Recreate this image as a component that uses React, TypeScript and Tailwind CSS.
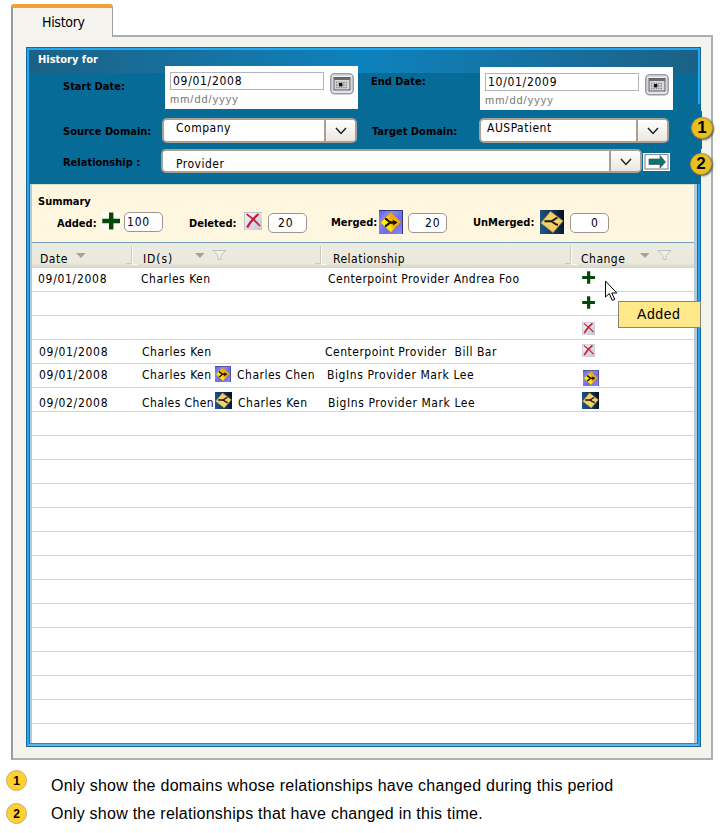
import React from "react";
import { clsx } from "clsx";
import { twMerge } from "tailwind-merge";

const TAHOMA = "font-['DejaVu_Sans_Condensed','DejaVu_Sans',sans-serif] [font-stretch:condensed]";

function Label({ children, className }: { children: React.ReactNode; className?: string }) {
  return <span className={clsx("shrink-0 whitespace-pre text-[11px] leading-[16px] font-bold", className || "text-black")}>{children}</span>;
}

function Txt({ children, className }: { children?: React.ReactNode; className?: string }) {
  return <span className={twMerge("shrink-0 whitespace-pre text-[12px] leading-[16px] tracking-[0.5px] text-black", className)}>{children}</span>;
}

function CalendarIcon() {
  return (
    <svg width="24" height="22" viewBox="0 0 24 22" className="block shrink-0">
      <rect x="0.8" y="0.8" width="22.4" height="20" rx="4" fill="#f1f1f6" stroke="#9a9aa6" strokeWidth="1.6" />
      <rect x="2.5" y="2.5" width="19" height="16.5" rx="3" fill="#f4f4f8" stroke="#d5d5de" />
      <rect x="4" y="4.500" width="16" height="12.500" fill="#d9d9d9" stroke="#555" />
      <rect x="4" y="4.500" width="16" height="2.500" fill="#6b6b6b" />
      <path d="M6 9.5h12M6 12h12M6 14.5h12" stroke="#888" strokeWidth="1.4" strokeDasharray="1.4 1" />
      <rect x="9" y="10" width="3.4" height="3.4" fill="#111" />
    </svg>
  );
}

function PlusIcon({ size }: { size: number }) {
  return (
    <svg width={size} height={size} viewBox="0 0 18 18" className="block shrink-0 bg-white/60">
      <path d="M7 0.5h4.4v6.3H18v4.4h-6.6v6.3H7v-6.3H0.3V6.8H7z" fill="#034a08" />
    </svg>
  );
}

function DeleteIcon({ size }: { size: number }) {
  return (
    <svg width={size} height={size} viewBox="0 0 18 18" className="block shrink-0">
      <defs>
        <linearGradient id="delbg" x1="0" y1="0" x2="1" y2="1">
          <stop offset="0" stopColor="#f7f7fb" />
          <stop offset="1" stopColor="#c4c4d2" />
        </linearGradient>
      </defs>
      <rect width="18" height="18" fill="url(#delbg)" />
      <path d="M0 0.5h18M0.5 0v18" stroke="#b9b9c4" strokeWidth="0.8" />
      <path d="M2.500 2c5 3.500 9 7 13.500 12" fill="none" stroke="#d0203a" strokeWidth="1.700" />
      <path d="M14.500 2C10 6 6 10 3.200 15.500" fill="none" stroke="#c81834" strokeWidth="2.200" />
    </svg>
  );
}

function MergeIcon({ size }: { size: number }) {
  return (
    <svg width={size} height={size} viewBox="0 0 24 24" className="block shrink-0">
      <defs>
        <linearGradient id="mergebg" x1="0" y1="0" x2="1" y2="1">
          <stop offset="0" stopColor="#5a5ae0" />
          <stop offset="0.3" stopColor="#8a8afa" />
          <stop offset="0.6" stopColor="#6a6af0" />
          <stop offset="1" stopColor="#8a8af8" />
        </linearGradient>
        <linearGradient id="mergesign" x1="0" y1="0.7" x2="1" y2="0.3">
          <stop offset="0.35" stopColor="#fff000" />
          <stop offset="0.6" stopColor="#f0a818" />
        </linearGradient>
      </defs>
      <rect width="24" height="24" fill="url(#mergebg)" />
      <path d="M0 0.5h23.500V24" fill="none" stroke="#35357a" />
      <path d="M12 2l10 10-10 10.500L1.500 12.500z" fill="url(#mergesign)" stroke="#b8860b" strokeWidth="0.7" />
      <path d="M6 8.800c3 0 3 3.700 6 3.700h5M6 16c3 0 3-3.500 6-3.500" fill="none" stroke="#1a1400" strokeWidth="2.300" />
      <path d="M13.500 9.500l5 3-5 3.300 1-3.300z" fill="#1a1400" />
    </svg>
  );
}

function UnmergeIcon({ size }: { size: number }) {
  return (
    <svg width={size} height={size} viewBox="0 0 24 24" className="block shrink-0">
      <defs>
        <linearGradient id="unmergebg" x1="0" y1="0.5" x2="1" y2="0.3">
          <stop offset="0" stopColor="#1c5585" />
          <stop offset="0.6" stopColor="#0e3158" />
          <stop offset="1" stopColor="#051026" />
        </linearGradient>
      </defs>
      <rect width="24" height="24" fill="url(#unmergebg)" />
      <path d="M10.500 1.500L23 11 13 22.500 1 13z" fill="#f1cf6c" stroke="#c79a35" strokeWidth="0.8" />
      <path d="M4.500 11.300h7M17.500 8c-3 0-4 3.300-7 3.300 3 0 4 3.500 7.500 3.500" fill="none" stroke="#1a1608" strokeWidth="1.900" />
    </svg>
  );
}

function SortArrow({ className }: { className?: string }) {
  return (
    <svg width="10" height="5" viewBox="0 0 10 5" className={clsx("block shrink-0", className)}>
      <path d="M0 0h9.500L5 5z" fill="#a5a397" />
    </svg>
  );
}

function Funnel({ className }: { className?: string }) {
  return (
    <svg width="15" height="11" viewBox="0 0 15 11" className={clsx("block shrink-0", className)}>
      <path d="M0.800 0.500h13L9 5.500V9.500H6V5.500z" fill="#f1f0ea" stroke="#bfbfc2" />
    </svg>
  );
}

function Divider({ className }: { className?: string }) {
  return (
    <svg width="12" height="19" viewBox="0 0 12 19" className={clsx("block shrink-0", className)}>
      <path d="M5.500 0v17.500H0" fill="none" stroke="#cbc9bb" />
      <path d="M6.500 0v18.500H12" fill="none" stroke="#fbfbf7" />
    </svg>
  );
}

function Select({ value, className, textClass }: { value: string; className: string; textClass: string }) {
  return (
    <div className={clsx("flex shrink-0 overflow-hidden rounded-[5px] border-2 border-[#ab9f92] bg-white", className)}>
      <div className="flex-1 overflow-hidden">
        <Txt className={clsx("block", textClass)}>{value}</Txt>
      </div>
      <div className="flex h-full w-[31px] items-center justify-center border-l-2 border-[#ab9f92] bg-linear-to-b from-white to-[#ebe7e0]">
        <svg width="12" height="8" viewBox="0 0 12 8" className="mt-px block">
          <path d="M1 1l5 5.500L11 1" fill="none" stroke="#222" strokeWidth="1.500" />
        </svg>
      </div>
    </div>
  );
}

function DateField({ value, className }: { value: string; className?: string }) {
  return (
    <div className={clsx("flex h-[43px] shrink-0 bg-white", className)}>
      <div className="mt-[6px] ml-[5px] w-[154px]">
        <div className="h-[18px] border border-[#b4b4ba] pl-[2px]">
          <Txt className="block tracking-[0.7px]">{value}</Txt>
        </div>
        <div className="mt-[2px] h-[15px] font-['Liberation_Sans',Arial,sans-serif] text-[11px] leading-[15px] tracking-[1px] text-[#777]">mm/dd/yyyy</div>
      </div>
      <div className="mt-[7px] ml-[6px]">
        <CalendarIcon />
      </div>
    </div>
  );
}

function CountBox({ value, className }: { value: string; className?: string }) {
  return (
    <div className={clsx("flex h-[20px] w-[39px] shrink-0 items-center rounded-[5px] border border-[#9d9590] bg-white", className)}>
      <Txt className="tracking-[0.8px]">{value}</Txt>
    </div>
  );
}

function Badge({ n, className }: { n: string; className: string }) {
  return (
    <div className={clsx("flex shrink-0 items-center justify-center rounded-full border font-['Liberation_Sans',Arial,sans-serif] font-bold text-black", className)}>
      {n}
    </div>
  );
}

type Row = {
  date?: string;
  ids?: React.ReactNode;
  rel?: string;
  padX?: string;
  padY?: string;
  relClass?: string;
  change?: React.ReactNode;
};

const rows: Row[] = [
  { date: "09/01/2008", ids: <Txt>Charles Ken</Txt>, rel: "Centerpoint Provider Andrea Foo", padX: "pl-[6px]", padY: "pt-[3px]", relClass: "pl-[3px]", change: <div className="mt-[3px] ml-[1px]"><PlusIcon size={13} /></div> },
  { change: <div className="mt-[4px] ml-[1px]"><PlusIcon size={13} /></div> },
  { change: <div className="mt-[6px] ml-[1px]"><DeleteIcon size={13} /></div> },
  { date: "09/01/2008", ids: <Txt>Charles Ken</Txt>, rel: "Centerpoint Provider  Bill Bar", padX: "pl-[7px]", padY: "pt-[4px]", change: <div className="mt-[4px] ml-[1px]"><DeleteIcon size={13} /></div> },
  {
    date: "09/01/2008",
    ids: <><Txt className="w-[73px]">Charles Ken</Txt><div className="-mt-px"><MergeIcon size={16} /></div><Txt className="ml-[6px]">Charles Chen</Txt></>,
    rel: "BigIns Provider Mark Lee",
    padX: "pl-[7px]",
    padY: "pt-[3px]",
    relClass: "pl-[2px] tracking-[0.58px]",
    change: <div className="mt-[6px] ml-[2px]"><MergeIcon size={16} /></div>,
  },
  {
    date: "09/02/2008",
    ids: <><Txt className="w-[73px] tracking-[0.4px]">Chales Chen</Txt><div className="-mt-[3px]"><UnmergeIcon size={17} /></div><Txt className="ml-[6px]">Charles Ken</Txt></>,
    rel: "BigIns Provider Mark Lee",
    padX: "pl-[7px]",
    padY: "pt-[7px]",
    relClass: "pl-[3px] tracking-[0.58px]",
    change: <div className="mt-[4px] ml-[1px]"><UnmergeIcon size={17} /></div>,
  },
  {}, {}, {}, {}, {}, {}, {}, {}, {}, {}, {}, {}, {},
];

function FilterPanel() {
  return (
    <div className="h-[134px] bg-[#076b98]">
      <div className="h-[23px] bg-linear-to-r from-[#1b6186] via-[#0c82bd] to-[#1b6186] pt-[2px] pl-[9px]">
        <Label className="block text-white">History for</Label>
      </div>
      <div className="-mt-[7px] flex h-[44px] pl-[34px]">
        <Label className="mt-[13px] w-[102px]">Start Date:</Label>
        <DateField value="09/01/2008" className="w-[193px]" />
        <Label className="mt-[8px] ml-[13px] w-[109px]">End Date:</Label>
        <DateField value="10/01/2009" className="mt-[1px] w-[193px]" />
      </div>
      <div className="mt-[8px] flex h-[25px] pl-[34px]">
        <Label className="mt-[6px] w-[99px]">Source Domain:</Label>
        <Select value="Company" className="h-[25px] w-[195px]" textClass="pl-[12px]" />
        <Label className="mt-[6px] ml-[15px] w-[107px]">Target Domain:</Label>
        <Select value="AUSPatient" className="h-[25px] w-[190px]" textClass="pl-[6px]" />
      </div>
      <div className="mt-[6px] flex h-[24px] pl-[34px]">
        <Label className="mt-[6px] w-[98px]">Relationship :</Label>
        <Select value="Provider" className="h-[24px] w-[481px]" textClass="pl-[13px] pt-[5px]" />
        <svg width="27" height="18" viewBox="0 0 27 18" className="mt-[4px] ml-[1px] block shrink-0">
          <rect width="27" height="18" fill="#fff" />
          <rect x="2" y="1.500" width="23" height="14.500" fill="#fff" stroke="#8a9296" strokeWidth="1.200" />
          <path d="M6 6h11V2.500L22.500 9 17 15v-3.500H6z" fill="#0b746f" stroke="#4a5456" strokeWidth="0.700" />
        </svg>
      </div>
    </div>
  );
}

function Summary() {
  return (
    <div className="h-[58px] border-t border-[#d8dccc] bg-[#fff6df] pl-[6px]">
      <Label className="block h-[23px] pt-[9px]">Summary</Label>
      <div className="flex h-[24px] items-start pt-[2px] pl-[19px]">
        <Label className="mt-[6px] w-[45px]">Added:</Label>
        <div className="mt-[2px]"><PlusIcon size={18} /></div>
        <CountBox value="100" className="mt-[2px] ml-[4px] pl-[2px]" />
        <Label className="mt-[6px] ml-[26px] w-[55px]">Deleted:</Label>
        <div className="mt-[2px]"><DeleteIcon size={18} /></div>
        <CountBox value="20" className="mt-[3px] ml-[6px] pl-[9px]" />
        <Label className="mt-[5px] ml-[24px] w-[48px]">Merged:</Label>
        <MergeIcon size={24} />
        <CountBox value="20" className="mt-[3px] ml-[5px] pl-[16px]" />
        <Label className="mt-[5px] ml-[26px] w-[67px]">UnMerged:</Label>
        <UnmergeIcon size={24} />
        <CountBox value="0" className="mt-[3px] ml-[6px] pl-[20px]" />
      </div>
    </div>
  );
}

function TableHeader() {
  return (
    <div className="flex h-[26px] items-start border-t border-[#789fba] bg-linear-to-b from-[#ecebdf] via-[#ebe9dc] via-80% to-[#d6d4c7] pl-[8px]">
      <Txt className="mt-[8px] w-[36px]">Date</Txt>
      <SortArrow className="mt-[10px]" />
      <Divider className="mt-[3px] ml-[40px]" />
      <Txt className="mt-[8px] ml-[5px] w-[52px] tracking-[0.9px]">ID(s)</Txt>
      <SortArrow className="mt-[10px]" />
      <Funnel className="mt-[7px] ml-[7px]" />
      <Divider className="mt-[3px] ml-[88px]" />
      <Txt className="mt-[8px] ml-[6px] w-[232px]">Relationship</Txt>
      <Divider className="mt-[3px]" />
      <Txt className="mt-[8px] ml-[4px] w-[59px]">Change</Txt>
      <SortArrow className="mt-[10px]" />
      <Funnel className="mt-[7px] ml-[7px]" />
    </div>
  );
}

export default function App() {
  return (
    <div className={clsx("relative h-[833px] w-[720px] overflow-hidden bg-white", TAHOMA)}>
      <div className="relative z-10 mt-[4px] ml-[11px] h-[33px] w-[102px] rounded-t-[3px] border-t-4 border-r border-l-2 border-t-[#f1a036] border-r-[#9aa2a4] border-l-[#939d9e] bg-[#f4f3ee]">
        <Txt className="block pt-[6px] pl-[29px] text-[14px] leading-[16px] tracking-[-0.3px]">History</Txt>
      </div>
      <div className="-mt-[2px] ml-[11px] h-[725px] w-[702px] border-2 border-t-[#a9afb0] border-r-[#a9b1b3] border-b-[#a9b1b3] border-l-[#939d9e] bg-[#f4f3ee] pt-[10px] pl-[13px]">
        <div className="h-[700px] w-[675px] border border-[#17679a] bg-[#22a9f3]">
          <div className="border-2 border-[#22a9f3] border-b-[#62b7e2]">
            <div className="h-[694px] w-[669px] border-b border-b-[#2c83b3] bg-white">
              <FilterPanel />
              <div className="h-[559px] border-x border-[#1570a5]">
                <div className="h-[559px] border-r-[3px] border-l-2 border-[#b8c8d6]">
                  <Summary />
                  <TableHeader />
                  {rows.map((r, i) => (
                    <div key={i} className="flex h-[24px] items-start border-b border-[#d2d2d2]">
                      <div className={clsx("flex w-[293px] shrink-0 items-start", r.padX, r.padY)}>
                        <Txt className="w-[103px] tracking-[0.7px]">{r.date}</Txt>
                        {r.ids}
                      </div>
                      <Txt className={clsx("w-[256px]", r.padY, r.relClass)}>{r.rel}</Txt>
                      {r.change}
                    </div>
                  ))}
                </div>
              </div>
            </div>
          </div>
        </div>
      </div>
      <div className="mt-[10px] flex pl-[6px]">
        <Badge n="1" className="h-[21px] w-[21px] border-[#bfae7a] bg-[#ffd02e] text-[12px]" />
        <p className="mt-[7px] ml-[24px] font-['Liberation_Sans',Arial,sans-serif] text-[16px] leading-[18px] tracking-[0.26px] whitespace-nowrap text-black">Only show the domains whose relationships have changed during this period</p>
      </div>
      <div className="mt-[8px] flex pl-[6px]">
        <Badge n="2" className="h-[21px] w-[21px] border-[#bfae7a] bg-[#ffd02e] text-[12px]" />
        <p className="mt-[2px] ml-[24px] font-['Liberation_Sans',Arial,sans-serif] text-[16px] leading-[18px] tracking-[0.25px] whitespace-nowrap text-black">Only show the relationships that have changed in this time.</p>
      </div>

      <div className="absolute top-[104px] left-[698px] z-10 h-[80px] w-[3px] bg-[#076b98]" />
      <div className="absolute top-[111px] left-[701px] z-10 h-[38px] w-px bg-[#076b98]" />
      <Badge n="1" className="absolute top-[117px] left-[691px] z-20 h-[22px] w-[22px] border-[#b8952a] bg-[#e8c020] text-[17px] shadow-[1px_1px_2px_#555]" />
      <Badge n="2" className="absolute top-[153px] left-[690px] z-20 h-[22px] w-[22px] border-[#b8952a] bg-[#e8c020] text-[17px] shadow-[1px_1px_2px_#555]" />
      <div className="absolute top-[301px] left-[618px] z-20 h-[27px] w-[83px] border border-[#8a8570] bg-[#ffe88a] pl-[18px] font-['Liberation_Sans',Arial,sans-serif] text-[14px] leading-[25px] tracking-[0.6px] text-black">Added</div>
      <svg width="14" height="22" viewBox="0 0 14 22" className="absolute top-[280px] left-[605px] z-30">
        <path d="M0.500 1v16l3.800-3.500 3 7 2.500-1.200-3-6.300h5z" fill="#fff" stroke="#000" />
      </svg>
    </div>
  );
}
